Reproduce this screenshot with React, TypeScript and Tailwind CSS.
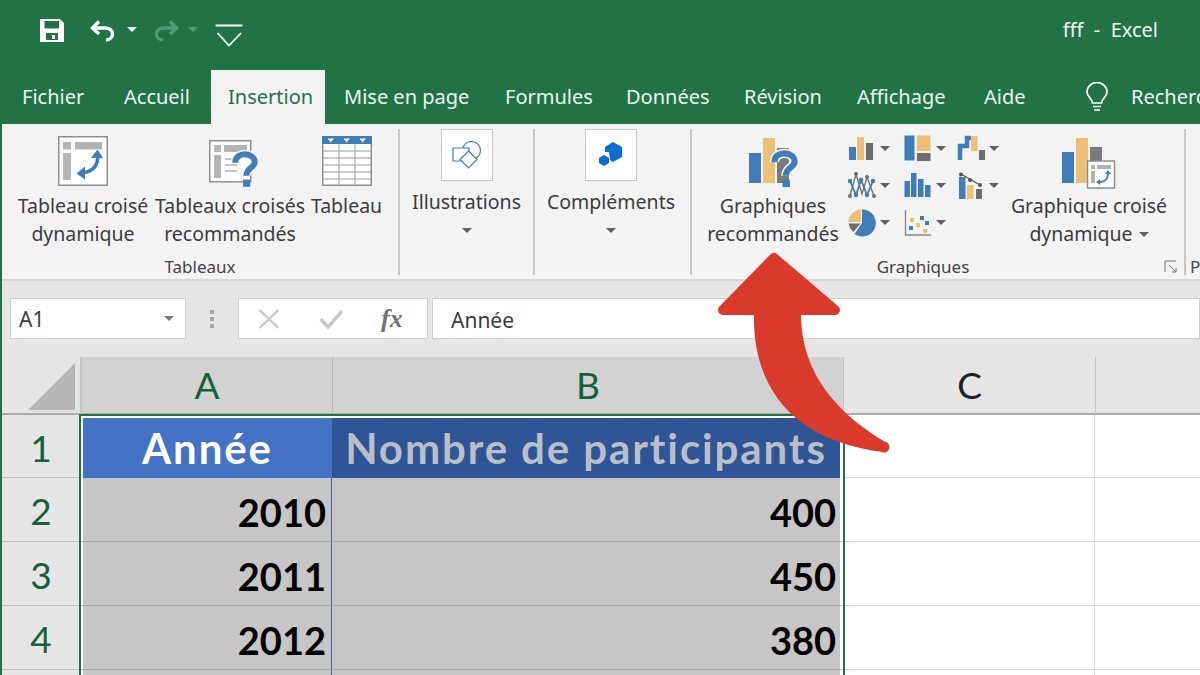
// Excel ribbon with the "Insertion" tab open and a red arrow on "Graphiques recommandés"
const BLUE = "#3f7cb8";
const YELLOW = "#ecc077";
const GREY = "#6e6e6e";

const Caret = ({ className = "border-t-[#606060]" }: { className?: string }) => (
  <span className={`inline-block w-0 h-0 border-x-[5px] border-x-transparent border-t-[5px] ${className}`} />
);

const Question = ({ x, y, s = 1 }: { x: number; y: number; s?: number }) => (
  <g transform={`translate(${x} ${y}) scale(${s})`}>
    <path d="M2.5 9C2.5 4.5 6 2.5 10 2.5S17.5 5 17.5 8.5C17.5 13 11 13 11 19" fill="none" stroke="#f3f3f3" strokeWidth="7" />
    <path d="M2.5 9C2.5 4.5 6 2.5 10 2.5S17.5 5 17.5 8.5C17.5 13 11 13 11 19" fill="none" stroke={BLUE} strokeWidth="4.5" />
    <rect x="8.5" y="22" width="5.5" height="5.5" fill={BLUE} />
  </g>
);

const PivotIcon = () => (
  <svg width="50" height="50" viewBox="0 0 50 50">
    <rect x="0.75" y="0.75" width="48.5" height="48.5" fill="#fff" stroke="#8f8f8f" strokeWidth="1.5" />
    <rect x="5" y="6" width="8" height="7.5" fill="#b4b4b4" />
    <rect x="17" y="6" width="27" height="7.5" fill="#b4b4b4" />
    <rect x="5" y="17" width="8" height="27" fill="#b4b4b4" />
    <path d="M40 19C40 30 34 36 24 37" fill="none" stroke={BLUE} strokeWidth="3.5" />
    <path d="M33 22L39.5 13.5L45 22ZM27 30.5L18.5 37.5L27 43.5Z" fill={BLUE} />
  </svg>
);

const RecoPivotIcon = () => (
  <svg className="mt-[4px] ml-[7px]" width="50" height="48" viewBox="0 0 50 48">
    <rect x="0.75" y="0.75" width="41" height="41" fill="#fff" stroke="#8f8f8f" strokeWidth="1.5" />
    <rect x="5" y="5" width="7" height="7" fill="#b4b4b4" />
    <rect x="15" y="5" width="23" height="7" fill="#b4b4b4" />
    <rect x="5" y="15" width="7" height="23" fill="#b4b4b4" />
    <path d="M16 19H28M16 25H28M16 31H28" stroke="#c4c4c4" strokeWidth="2" />
    <Question x={23} y={11} s={1.3} />
  </svg>
);

const TableIcon = () => (
  <svg width="50" height="50" viewBox="0 0 50 50">
    <rect x="0.75" y="0.75" width="48.5" height="48.5" fill="#fff" stroke="#8f8f8f" strokeWidth="1.5" />
    <rect x="0" y="0" width="50" height="8" fill={BLUE} />
    <path d="M0.5 15H49.5M0.5 22H49.5M0.5 29H49.5M0.5 36H49.5M0.5 43H49.5M17 8V49M33 8V49" stroke="#9c9c9c" strokeWidth="1" />
    <path d="M5.5 2.5H12L8.75 6.5ZM21.5 2.5H28L24.75 6.5ZM37.5 2.5H44L40.75 6.5Z" fill="#fff" />
  </svg>
);

const ShapesIcon = () => (
  <svg width="30" height="28" viewBox="0 0 30 28" fill="none" stroke={BLUE} strokeWidth="1.2">
    <circle cx="19.5" cy="9.5" r="9" fill="#fff" />
    <path d="M1 7H17V20H1Z" fill="#fff" />
    <path d="M16.5 10L25 18.5L16.5 27L8 18.5Z" fill="#fff" />
  </svg>
);

const AddinIcon = () => (
  <svg width="24" height="26" viewBox="0 0 24 26" fill="#0a6ed1">
    <path d="M14 0L23 5V15L14 20L11 18L10 10H6V5Z" />
    <path d="M5 13L10 16V21L5 24L0 21V16Z" />
  </svg>
);

const RecoChartIcon = () => (
  <svg className="mt-[2px] ml-[2px]" width="50" height="52" viewBox="0 0 50 52">
    <rect x="0" y="15" width="12" height="30" fill={BLUE} />
    <rect x="14" y="0" width="12" height="45" fill={YELLOW} />
    <rect x="28" y="10" width="12" height="35" fill="#7a7a7a" />
    <Question x={22} y={12} s={1.35} />
  </svg>
);

const Clustered = () => (
  <svg width="28" height="28" viewBox="0 0 28 28">
    <rect x="1" y="12" width="7" height="13" fill={BLUE} />
    <rect x="9" y="2" width="7" height="23" fill={YELLOW} />
    <rect x="18" y="8" width="7" height="17" fill={GREY} />
  </svg>
);
const Treemap = () => (
  <svg width="28" height="28" viewBox="0 0 28 28">
    <rect x="0.5" y="0.5" width="10" height="25" fill={BLUE} />
    <rect x="13" y="0.5" width="13.5" height="15.5" fill={YELLOW} />
    <rect x="13" y="18" width="13.5" height="8" fill={GREY} />
  </svg>
);
const Waterfall = () => (
  <svg width="28" height="28" viewBox="0 0 28 28">
    <path d="M3 25V11H10V3H14" fill="none" stroke={BLUE} strokeWidth="4.5" />
    <rect x="14" y="1" width="6.5" height="15" fill={YELLOW} />
    <rect x="22" y="15" width="6" height="10" fill={GREY} />
  </svg>
);
const LineDots = () => (
  <svg width="28" height="28" viewBox="0 0 28 28">
    <path d="M2 9L8 23L13 8L19 23L25 9" fill="none" stroke={BLUE} strokeWidth="1.8" />
    <path d="M2 24L8 2L14 22L19 5L26 24" fill="none" stroke={GREY} strokeWidth="1.3" />
    {[[2, 9], [8, 23], [13, 8], [19, 23], [25, 9]].map(([x, y]) => <circle key={x} cx={x} cy={y} r="2.2" fill={BLUE} />)}
    {[[2, 24], [8, 2], [19, 5], [26, 24]].map(([x, y]) => <circle key={x} cx={x} cy={y} r="2" fill={GREY} />)}
  </svg>
);
const Bars = () => (
  <svg width="28" height="28" viewBox="0 0 28 28">
    <rect x="0.5" y="9" width="5.5" height="16" fill={BLUE} />
    <rect x="7" y="1" width="5.5" height="24" fill={BLUE} />
    <rect x="14" y="7" width="5.5" height="18" fill={BLUE} />
    <rect x="21" y="13" width="5.5" height="12" fill={BLUE} />
  </svg>
);
const Combo = () => (
  <svg width="28" height="28" viewBox="0 0 28 28">
    <rect x="2" y="5" width="6.5" height="22" fill={BLUE} />
    <rect x="10" y="13" width="6.5" height="14" fill={YELLOW} />
    <rect x="19" y="17" width="6" height="10" fill={GREY} />
    <path d="M4 2L23 13" stroke="#555" strokeWidth="1.2" />
    <circle cx="4" cy="2.5" r="2" fill="#555" />
    <circle cx="13" cy="8" r="2" fill="#555" />
    <circle cx="23" cy="13" r="2" fill="#555" />
  </svg>
);
const Pie = () => (
  <svg width="28" height="28" viewBox="0 0 28 28">
    <path d="M14 14V0.5A13.5 13.5 0 1 1 6.5 25Z" fill={BLUE} />
    <path d="M13 13V0.5A13 13 0 0 0 0.5 13Z" fill={YELLOW} />
    <path d="M12.5 14.5L5.5 23A13 13 0 0 1 0.8 14.5Z" fill={GREY} />
  </svg>
);
const Scatter = () => (
  <svg width="28" height="28" viewBox="0 0 28 28">
    <path d="M1.5 1V26H27" fill="none" stroke="#8a8a8a" strokeWidth="1.4" />
    <rect x="6" y="9" width="4" height="4" fill={YELLOW} />
    <rect x="16" y="7" width="4" height="4" fill={BLUE} />
    <rect x="12" y="14" width="4" height="4" fill={YELLOW} />
    <rect x="21" y="12" width="4" height="4" fill={BLUE} />
    <rect x="5" y="17" width="4" height="4" fill={BLUE} />
    <rect x="19" y="20" width="4" height="4" fill={YELLOW} />
  </svg>
);

const PivotChartIcon = () => (
  <svg className="mt-[2px]" width="54" height="52" viewBox="0 0 54 52">
    <rect x="0" y="14" width="12" height="31" fill={BLUE} />
    <rect x="14" y="0" width="12" height="45" fill={YELLOW} />
    <rect x="28" y="9" width="12" height="36" fill="#7a7a7a" />
    <rect x="25.5" y="23" width="27" height="27" fill="#fff" stroke="#8f8f8f" strokeWidth="1.5" />
    <rect x="29" y="27" width="4" height="4" fill="#b4b4b4" />
    <rect x="35" y="27" width="14" height="4" fill="#b4b4b4" />
    <rect x="29" y="33" width="4" height="12" fill="#b4b4b4" />
    <path d="M46 35C46 41 43 44 38 44" fill="none" stroke={BLUE} strokeWidth="1.8" />
    <path d="M43 36L46 32L49 36ZM38 41L34 44L38 47Z" fill={BLUE} />
  </svg>
);

const LargeButton = ({ width, icon, lines }: { width: string; icon: React.ReactNode; lines: React.ReactNode[] }) => (
  <div className={`${width} flex flex-col items-center`}>
    <div className="h-[64px] pt-[8px] flex items-start justify-center">{icon}</div>
    {lines.map((l, i) => (
      <div key={i} className="h-[28px] leading-[28px] whitespace-nowrap text-[19.5px]">{l}</div>
    ))}
  </div>
);

const MenuButton = ({ icon, label }: { icon: React.ReactNode; label: string }) => (
  <div className="flex flex-col items-center">
    <div className="w-[52px] h-[52px] bg-white border border-[#c8c8c8] flex items-center justify-center">{icon}</div>
    <div className="h-[28px] mt-[7px] leading-[28px] text-[19.5px] whitespace-nowrap">{label}</div>
    <div className="h-[28px] flex items-center"><Caret /></div>
  </div>
);

const GroupLabel = ({ children }: { children: string }) => (
  <div className="h-[26px] leading-[28px] text-center text-[17px] text-[#444]">{children}</div>
);

const Divider = () => <div className="w-[2px] h-[146px] mt-[5px] bg-[#c6c6c6] shrink-0" />;

const tabs = [
  { label: "Fichier", cls: "w-[102px] pl-[22px]" },
  { label: "Accueil", cls: "w-[109px] pl-[22px]" },
  { label: "Insertion", cls: "w-[114px] pl-[17px] bg-[#f3f3f3] text-[#217346]" },
  { label: "Mise en page", cls: "w-[180px] pl-[19px]" },
  { label: "Formules", cls: "w-[121px]" },
  { label: "Données", cls: "w-[118px]" },
  { label: "Révision", cls: "w-[113px]" },
  { label: "Affichage", cls: "w-[127px]" },
  { label: "Aide", cls: "w-[101px]" },
];

const smallCharts = [
  <Clustered key="a" />, <Treemap key="b" />, <Waterfall key="c" />,
  <LineDots key="d" />, <Bars key="e" />, <Combo key="f" />,
  <Pie key="g" />, <Scatter key="h" />,
];

const rows = [
  { n: "2", year: "2010", count: "400" },
  { n: "3", year: "2011", count: "450" },
  { n: "4", year: "2012", count: "380" },
  { n: "", year: "", count: "" },
];

export default function App() {
  return (
    <div className="relative w-[1200px] h-[675px] overflow-hidden bg-white font-['Noto_Sans',sans-serif] text-[#3c3c3c]">
      {/* Title bar */}
      <div className="h-[70px] bg-[#217346] flex items-start pt-[19px] pl-[40px] text-white">
        <svg width="24" height="23" viewBox="0 0 24 23" fill="#fff">
          <path fillRule="evenodd" d="M0 0H20L24 4V23H0ZM4.5 2V9.5H19V2ZM6 14V21H18V14ZM12 16H15V20H12Z" />
        </svg>
        <svg className="ml-[26px] mt-[1px]" width="26" height="22" viewBox="0 0 26 22" fill="none" stroke="#fff" strokeWidth="3.4">
          <path d="M9 1.5L2.5 8L9 14M3 8H15C20 8 22.5 11 22.5 14C22.5 17.5 19.5 20 16 20" />
        </svg>
        <span className="ml-[11px] mt-[8px] flex"><Caret className="border-t-white" /></span>
        <svg className="ml-[16px] mt-[1px]" width="26" height="22" viewBox="0 0 26 22" fill="none" stroke="#4f9a75" strokeWidth="3.4">
          <path d="M17 1.5L23.5 8L17 14M23 8H11C6 8 3.5 11 3.5 14C3.5 17.5 6.5 20 10 20" />
        </svg>
        <span className="ml-[9px] mt-[8px] flex"><Caret className="border-t-[#4f9a75]" /></span>
        <svg className="ml-[17px] mt-[5px]" width="28" height="23" viewBox="0 0 28 23" fill="none" stroke="#fff" strokeWidth="1.8">
          <path d="M0.5 1.5H27.5M2.5 9L14 21.5L26 9" />
        </svg>
        <div className="ml-auto pr-[42px] -mt-[3px] text-[20px] leading-[28px] whitespace-pre text-[#f1f6f3]">fff  -  Excel</div>
      </div>

      {/* Tabs */}
      <div className="h-[54px] bg-[#217346] flex text-[20px] text-[#eef5f1]">
        {tabs.map((t) => (
          <div key={t.label} className={`${t.cls} shrink-0 h-full leading-[54px] whitespace-nowrap`}>{t.label}</div>
        ))}
        <div className="shrink-0 flex items-center gap-[22px] whitespace-nowrap">
          <svg width="24" height="30" viewBox="0 0 24 30" fill="none" stroke="#fff" strokeWidth="1.7">
            <path d="M7.5 21C7 16 2 15 2 10A10 9.5 0 0 1 22 10C22 15 17 16 16.5 21ZM8 24.5H16M9 28H15" />
          </svg>
          <span>Rechercher</span>
        </div>
      </div>

      <div className="border-l-2 border-[#217346]">
        {/* Ribbon */}
        <div className="h-[157px] bg-[#f3f3f3] border-b-2 border-[#d8d8d8] flex">
          <div className="w-[396px] shrink-0">
            <div className="h-[129px] flex pl-[16px] pt-[4px]">
              <LargeButton width="w-[130px]" icon={<PivotIcon />} lines={["Tableau croisé", "dynamique"]} />
              <LargeButton width="w-[148px] ml-[8px]" icon={<RecoPivotIcon />} lines={["Tableaux croisés", "recommandés"]} />
              <LargeButton width="w-[71px] ml-[7px]" icon={<TableIcon />} lines={["Tableau"]} />
            </div>
            <GroupLabel>Tableaux</GroupLabel>
          </div>
          <Divider />
          <div className="w-[133px] shrink-0 pt-[5px]"><MenuButton icon={<ShapesIcon />} label="Illustrations" /></div>
          <Divider />
          <div className="w-[155px] shrink-0 pt-[5px] pr-[3px]"><MenuButton icon={<AddinIcon />} label="Compléments" /></div>
          <Divider />
          <div className="w-[492px] shrink-0">
            <div className="h-[129px] flex pt-[4px]">
              <LargeButton width="w-[162px]" icon={<RecoChartIcon />} lines={["Graphiques", "recommandés"]} />
              <div className="grid grid-cols-[56px_53px_44px] auto-rows-[37px] ml-[-6px] mt-[2px] h-fit">
                {smallCharts.map((icon, i) => (
                  <div key={i} className="flex items-center gap-[4px]">{icon}<Caret /></div>
                ))}
              </div>
              <LargeButton
                width="w-[170px] ml-[3px]"
                icon={<PivotChartIcon />}
                lines={["Graphique croisé", <span key="d" className="inline-flex items-center gap-[6px]">dynamique <Caret /></span>]}
              />
            </div>
            <div className="relative pr-[30px]">
              <GroupLabel>Graphiques</GroupLabel>
              <svg className="absolute right-[7px] top-[7px]" width="13" height="13" viewBox="0 0 13 13" fill="none" stroke="#777" strokeWidth="1">
                <path d="M12 1H1V12M5 5L12 12M8 12H12V8" />
              </svg>
            </div>
          </div>
          <Divider />
          <div className="pl-[4px] pt-[129px] text-[17px] leading-[28px] text-[#444]">P</div>
        </div>

        {/* Formula bar */}
        <div className="h-[76px] bg-[#e6e6e6] flex items-start pt-[17px]">
          <div className="ml-[8px] w-[176px] h-[41px] bg-white border border-[#d0d0d0] flex items-center justify-between pl-[8px] pr-[11px] text-[21px]">
            <span className="pt-[2px]">A1</span><Caret className="border-t-[#777]" />
          </div>
          <div className="w-[52px] h-[41px] flex flex-col items-center justify-center gap-[3px]">
            <i className="w-[4px] h-[4px] bg-[#a8a8a8]" />
            <i className="w-[4px] h-[4px] bg-[#a8a8a8]" />
            <i className="w-[4px] h-[4px] bg-[#a8a8a8]" />
          </div>
          <div className="w-[190px] h-[41px] bg-white border border-[#d0d0d0] flex items-center pl-[19px]">
            <svg width="22" height="20" viewBox="0 0 22 20" fill="none" stroke="#c8c8c8" strokeWidth="2.4"><path d="M1.5 1L20.5 19M20.5 1L1.5 19" /></svg>
            <svg className="ml-[39px]" width="24" height="20" viewBox="0 0 24 20" fill="none" stroke="#c8c8c8" strokeWidth="3.4"><path d="M1.5 10L9 18L23 2" /></svg>
            <span className="ml-[38px] font-['Liberation_Serif',serif] italic font-bold text-[26px] leading-none text-[#707070]">fx</span>
          </div>
          <div className="ml-[4px] flex-1 h-[41px] bg-white border border-[#d0d0d0] pl-[18px] leading-[42px] text-[21px]">Année</div>
        </div>

        {/* Sheet */}
        <div className="relative font-['Lato',sans-serif] grid grid-cols-[78px_252px_511px_252px_1fr] grid-rows-[58px_63px_64px_64px_64px_64px] bg-white">
          <div className="bg-[#e6e6e6] border-b-2 border-[#ababab] relative">
            <svg className="absolute left-[26px] top-[6px]" width="48" height="48" viewBox="0 0 48 48" fill="#b6b6b6"><path d="M47 0V47H0Z" /></svg>
          </div>
          <div className="bg-[#d2d2d2] border-l-2 border-[#c4c4c4] border-b-2 border-b-[#ababab] text-center text-[37px] leading-[55px] text-[#14613c]">A</div>
          <div className="bg-[#d2d2d2] border-l border-[#b8b8b8] border-b-2 border-b-[#ababab] text-center text-[37px] leading-[55px] text-[#14613c]">B</div>
          <div className="bg-[#e6e6e6] border-l border-[#c4c4c4] border-b-2 border-b-[#ababab] text-center text-[37px] leading-[55px] text-[#222]">C</div>
          <div className="bg-[#e6e6e6] border-l border-[#c4c4c4] border-b-2 border-b-[#ababab]" />

          <div className="bg-[#e6e6e6] border-b border-[#c0c0c0] text-center text-[37px] leading-[66px] text-[#14613c]">1</div>
          <div className="bg-[#4472c4] border-t-[3px] border-l-[3px] border-white text-center text-white font-bold text-[42px] tracking-[1.9px] leading-[60px]">Année</div>
          <div className="bg-[#2f5597] border-t-[3px] border-r-[3px] border-white text-center text-[#b9bfc9] font-bold text-[42px] tracking-[1.9px] leading-[60px] whitespace-nowrap">Nombre de participants</div>
          <div className="border-b border-r border-[#d4d4d4]" />
          <div className="border-b border-[#d4d4d4]" />

          {rows.map((r, i) => [
            <div key={i + "h"} className="bg-[#e6e6e6] border-b border-[#c0c0c0] text-center text-[37px] leading-[66px] text-[#14613c]">{r.n}</div>,
            <div key={i + "a"} className="bg-[#c6c6c6] border-l-[3px] border-l-white border-r border-r-[#4a66ad] border-b border-b-[#ababab] text-right pr-[5px] text-black font-bold text-[38px] leading-[69px]">{r.year}</div>,
            <div key={i + "b"} className="bg-[#c6c6c6] border-r-[3px] border-r-white border-b border-b-[#ababab] text-right pr-[4px] text-black font-bold text-[38px] leading-[69px]">{r.count}</div>,
            <div key={i + "c"} className="border-b border-r border-[#d4d4d4]" />,
            <div key={i + "d"} className="border-b border-[#d4d4d4]" />,
          ])}

          {/* selected range outline */}
          <div className="absolute left-[77px] top-[57px] w-[766px] h-[400px] border-2 border-[#217346]" />
        </div>
      </div>

      {/* Red arrow */}
      <svg className="absolute inset-0 pointer-events-none" width="1200" height="675" viewBox="0 0 1200 675">
        <path d="M774 258L723 310H835Z" fill="#d93a2c" stroke="#d93a2c" strokeWidth="10" strokeLinejoin="round" />
        <path d="M754 312C752 385 790 440 883 452L885 442C840 415 800 375 801 312Z" fill="#d93a2c" />
        <circle cx="884" cy="447" r="5.5" fill="#d93a2c" />
      </svg>
    </div>
  );
}
